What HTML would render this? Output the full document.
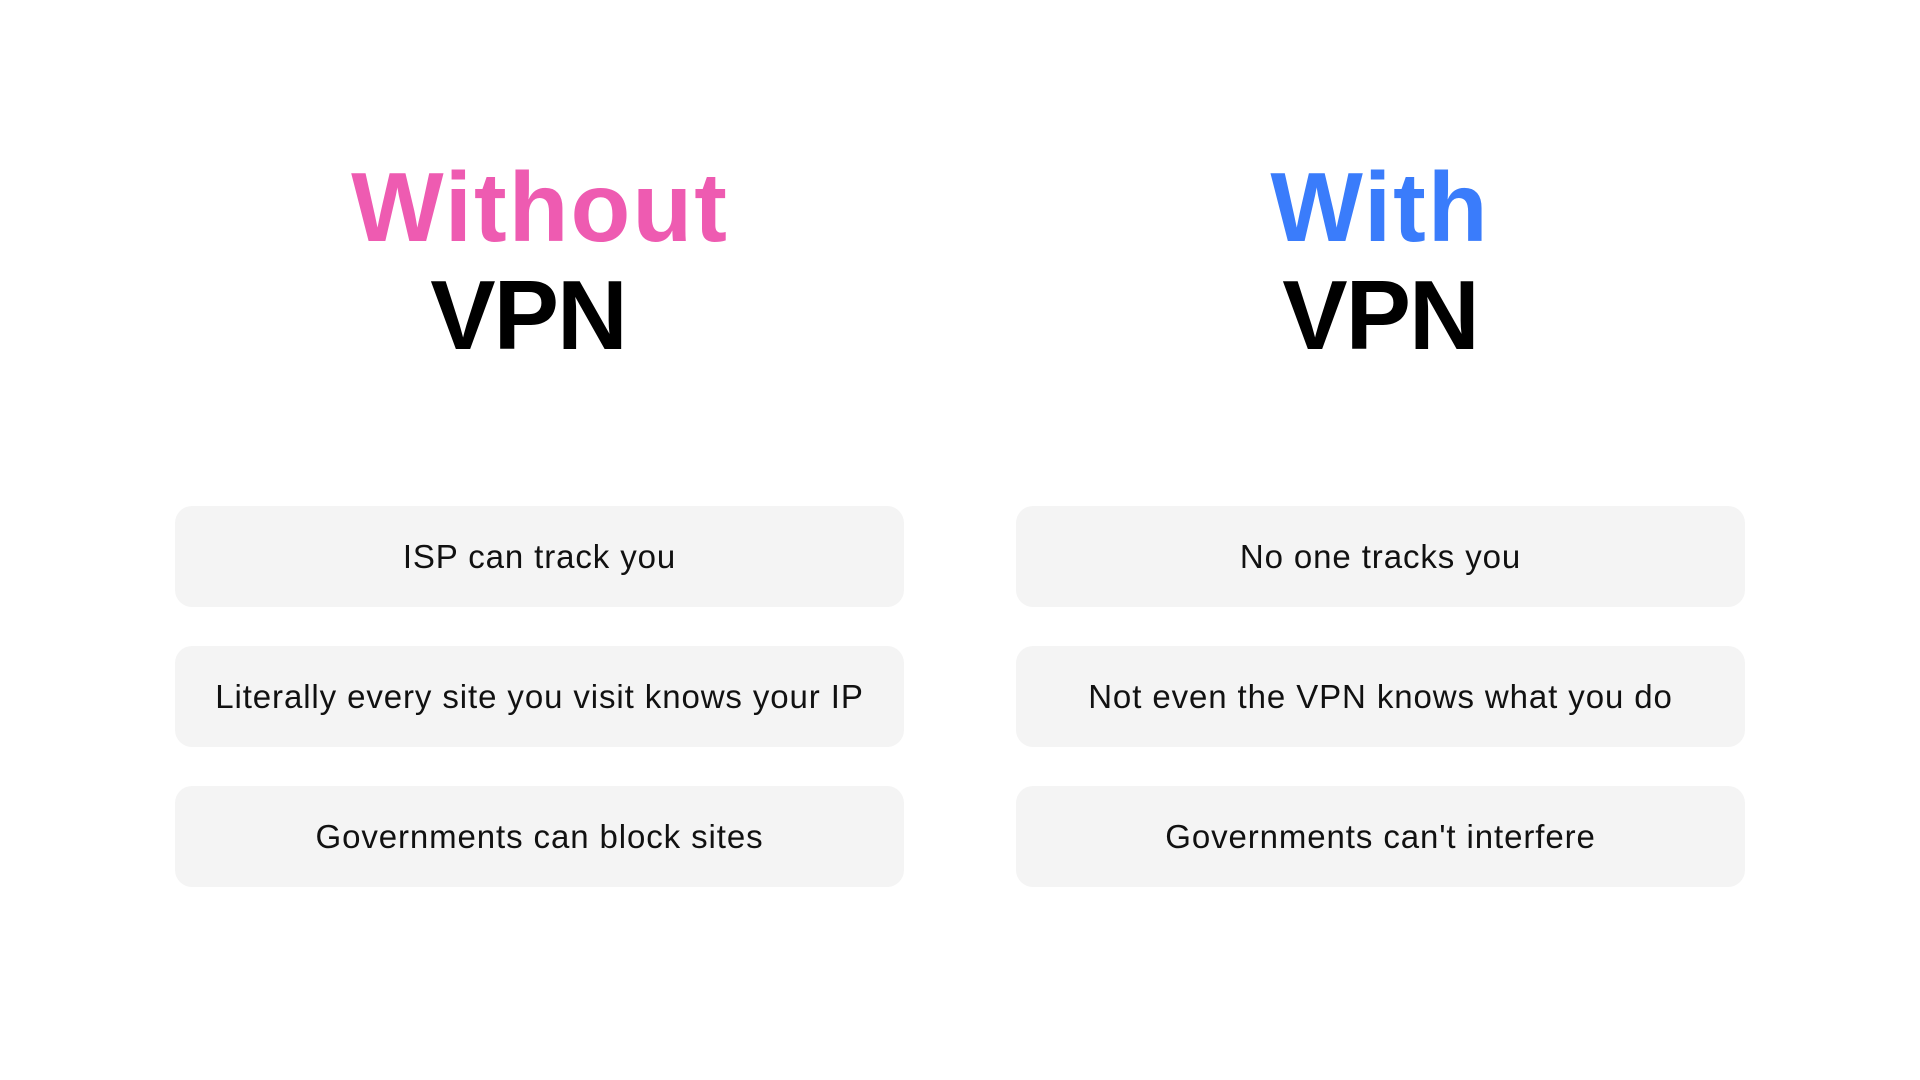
<!DOCTYPE html>
<html><head><style>
body{margin:0;width:1920px;height:1080px;background:#fff;font-family:"Liberation Sans",sans-serif;position:relative;overflow:hidden}
.h{position:absolute;width:600px;text-align:center;font-weight:bold;font-size:98px;line-height:1;letter-spacing:2px}
.card{position:absolute;width:729px;height:101px;background:#f4f4f4;border-radius:17px;display:flex;align-items:center;justify-content:center;font-size:33px;color:#111;letter-spacing:0.9px}
</style></head><body>
<div class="h" style="left:240px;top:158px;color:#ee5bb1">Without</div>
<div class="h" style="left:228px;top:266px;color:#000;letter-spacing:-2px">VPN</div>
<div class="h" style="left:1080px;top:158px;color:#3a7cfb">With</div>
<div class="h" style="left:1080px;top:266px;color:#000;letter-spacing:-2px">VPN</div>
<div class="card" style="left:175px;top:506px">ISP can track you</div>
<div class="card" style="left:175px;top:646px">Literally every site you visit knows your IP</div>
<div class="card" style="left:175px;top:786px">Governments can block sites</div>
<div class="card" style="left:1016px;top:506px">No one tracks you</div>
<div class="card" style="left:1016px;top:646px">Not even the VPN knows what you do</div>
<div class="card" style="left:1016px;top:786px">Governments can't interfere</div>
</body></html>
